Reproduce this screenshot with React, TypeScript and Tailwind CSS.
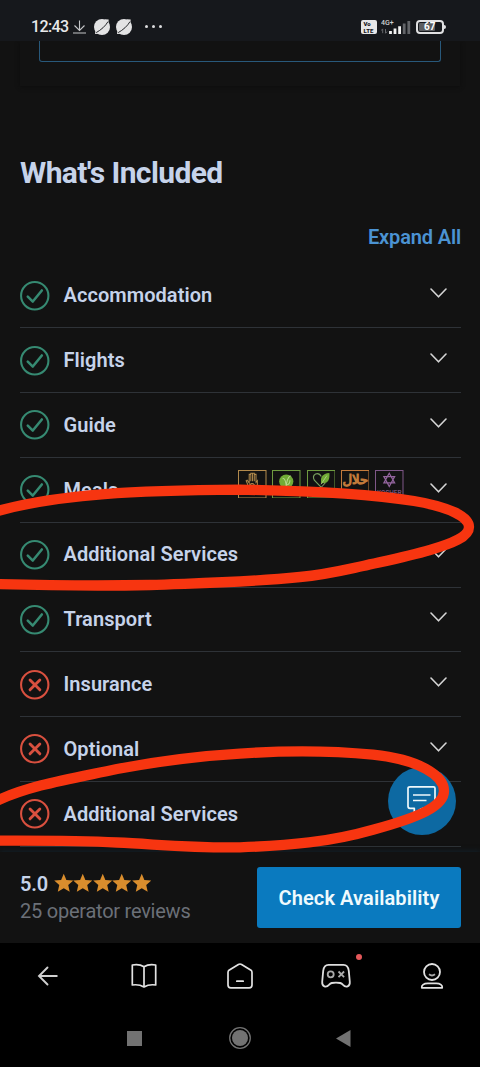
import type { ReactNode } from "react"

type Item = {
  label: string
  included: boolean
  diets?: boolean
}

const items: Item[] = [
  { label: "Accommodation", included: true },
  { label: "Flights", included: true },
  { label: "Guide", included: true },
  { label: "Meals", included: true, diets: true },
  { label: "Additional Services", included: true },
  { label: "Transport", included: true },
  { label: "Insurance", included: false },
  { label: "Optional", included: false },
  { label: "Additional Services", included: false },
]

function StatusBar() {
  return (
    <header className="flex h-[41px] shrink-0 items-center bg-[#16181c] pt-[12px] pr-[34px] pl-[31px] text-[#e8e8ea]">
      <span className="w-[42px] text-[16px] font-medium tracking-[-0.6px]">12:43</span>
      <svg width="14" height="14" viewBox="0 0 14 14" fill="none" stroke="#c4c5c8" strokeWidth="1.1">
        <path d="M6.5 0.5v9.5M1.5 5.5l5 5 5-5M0 13h13" />
      </svg>
      <PlanetIcon className="ml-[6px]" />
      <PlanetIcon className="ml-[4px]" />
      <div className="ml-[12px] flex gap-[4px]">
        <span className="size-[3px] rounded-full bg-[#dcdcde]" />
        <span className="size-[3px] rounded-full bg-[#dcdcde]" />
        <span className="size-[3px] rounded-full bg-[#dcdcde]" />
      </div>
      <div className="ml-auto flex items-center">
        <svg width="16" height="14" viewBox="0 0 16 14" fontSize="6" fontWeight="900" fill="#16181c">
          <rect width="16" height="14" rx="2" fill="#e6e6e8" />
          <text x="2.500" y="6">Vo</text>
          <text x="2.500" y="12.600">LTE</text>
        </svg>
        <svg className="ml-[4px]" width="30" height="16" viewBox="0 0 30 16">
          <text x="0" y="6" fontSize="7" fontWeight="500" fill="#cfd0d2">4G+</text>
          <path d="M1.7 14.2V10M0.2 11.6L1.7 9.8M4.5 10v4.2M6 12.600L4.500 14.300" stroke="#66686c" strokeWidth="1" fill="none" />
          <path d="M9.5 15v-3M14 15v-5.500M18.600 15V7.300" stroke="#f2f2f2" strokeWidth="2.800" />
          <path d="M23.200 15V4.500M27.800 15V2" stroke="#636569" strokeWidth="2.800" />
        </svg>
        <div className="ml-[5px] flex h-[14px] w-[28px] items-center rounded-[4px] border-2 border-[#e0e0e2] p-px">
          <span className="flex h-full w-[16px] items-center rounded-[1px] bg-[#5b5d61] pl-[5px] text-[10px] leading-none font-bold text-white">
            67
          </span>
        </div>
        <span className="h-[4px] w-[2px] rounded-r-sm bg-[#e0e0e2]" />
      </div>
    </header>
  )
}

function PlanetIcon({ className }: { className: string }) {
  return (
    <svg className={className} width="18" height="18" viewBox="0 0 18 18">
      <circle cx="9" cy="9" r="8" fill="#e3e3e4" />
      <path d="M11.500 1.300L15.700 1.600 15.400 5zM2.500 12.500L2 16 6 15.700z" fill="#e3e3e4" />
      <path d="M3.200 14.600C8 12 12.500 8 15 3.600" stroke="#25272b" strokeWidth="1" fill="none" />
    </svg>
  )
}

function StateIcon({ included }: { included: boolean }) {
  return included ? (
    <svg className="-ml-[0.5px] overflow-visible" width="29.5" height="29.5" viewBox="0 0 30 30" fill="none" stroke="#368a72">
      <circle cx="15" cy="15" r="13.9" strokeWidth="2.1" />
      <path d="M7.900 15.900l5.100 5L22.200 9.600" strokeWidth="2.600" strokeLinecap="round" strokeLinejoin="round" />
    </svg>
  ) : (
    <svg className="-ml-[0.5px] overflow-visible" width="29.5" height="29.5" viewBox="0 0 30 30" fill="none" stroke="#d9503f">
      <circle cx="15" cy="15" r="13.9" strokeWidth="2.1" />
      <path d="M10.200 10.200l10 10M20.200 10.200l-10 10" strokeWidth="2.900" strokeLinecap="round" />
    </svg>
  )
}

function DietBadge({ color, children }: { color: string; children: ReactNode }) {
  return (
    <svg width="28.5" height="28.5" viewBox="0 0 28 28" fill="none" stroke={color}>
      <rect x="0.5" y="0.5" width="27" height="27" />
      {children}
    </svg>
  )
}

function DietBadges() {
  return (
    <div className="mt-[-12px] mr-[26.5px] flex gap-[5.7px]">
      <DietBadge color="#b28a4c">
        <path
          d="M9.5 19V14L8 10.5l1-.6 2 3V4.3h1.6V11 3.2h1.7V11 3.2H16V11 4.3h1.7V12l1.3-1.6V15l-2 4M11.5 19v-4.500q2.500-2.200 4.500 0V19M10 16h7"
          strokeWidth="1"
        />
      </DietBadge>
      <DietBadge color="#6f9b40">
        <circle cx="14" cy="11.300" r="7" fill="#70ab36" stroke="none" />
        <path d="M10.400 8q3.600 0 3.600 10 0-10 4.300-12.500M13.800 15q4-1 3.800-5" stroke="#b8d890" strokeWidth="1" />
      </DietBadge>
      <DietBadge color="#6f9b40">
        <path d="M14 17L7.200 10Q5 6 8.400 4 12 2.600 14 6.500" stroke="#77a05e" strokeWidth="1.100" />
        <path d="M14 13C12.800 7 15 3.600 22 3c.5 6-1 11-8 10z" fill="#70ab36" stroke="none" />
        <path d="M14 17l4-4.300M13.800 14L19.500 5.500" stroke="#b6d58e" strokeWidth="0.800" />
      </DietBadge>
      <DietBadge color="#c27a3b">
        <text
          x="14"
          y="13.500"
          textAnchor="middle"
          fontSize="13"
          fontFamily="DejaVu Sans, sans-serif"
          fill="#dd8b3e"
        >
          حلال
        </text>
      </DietBadge>
      <DietBadge color="#7f5788">
        <path d="M14 3.200l5.300 9.500H8.700zM14 16.200L8.700 6.500h10.600z" stroke="#94659f" strokeWidth="1.200" />
        <text x="14" y="24.800" textAnchor="middle" fontSize="6.300" fill="#94659f" stroke="none">KOSHER</text>
      </DietBadge>
    </div>
  )
}

function ItemRow({ item }: { item: Item }) {
  return (
    <li className="flex h-[64.8px] items-center border-b border-[#2e3237] pr-[14px]">
      <StateIcon included={item.included} />
      <span className="-mt-[0.5px] ml-[14.5px] flex-1 text-[20px] font-semibold tracking-[0.06px] text-[#c6d3ea]">{item.label}</span>
      {item.diets && <DietBadges />}
      <svg className="mt-[-4px]" width="17" height="10" viewBox="0 0 17 10" fill="none" stroke="#d5d5d5" strokeWidth="1.600">
        <path d="M1 1l7.500 7.800L16 1" strokeLinecap="round" strokeLinejoin="round" />
      </svg>
    </li>
  )
}

function BookingBar() {
  return (
    <div className="flex h-[91px] shrink-0 items-center justify-between bg-[#121212] pr-[19px] pl-[20px] shadow-[0_-1px_5px_#132029]">
      <div>
        <div className="flex h-[27px] items-center">
          <span className="w-[33.5px] text-[20px] font-semibold tracking-[-0.2px] text-[#c6d3ea]">5.0</span>
          {[0, 1, 2, 3, 4].map((i) => (
            <svg key={i} className="-mt-[2px]" width="19.5" height="20" viewBox="0 0 20 20" fill="#d98d2d">
              <path d="M10 .5l2.700 6.300 7.100.6-5.200 4.600 1.500 7-6.100-3.600L3.900 19l1.500-7L.2 7.400l7.100-.6z" />
            </svg>
          ))}
        </div>
        <p className="text-[20px] leading-[28px] tracking-[-0.24px] text-[#6b7078]">25 operator reviews</p>
      </div>
      <button className="h-[61px] w-[204px] rounded-[3px] bg-[#0a7abf] text-[20px] font-semibold tracking-[0.1px] text-[#f0fafd]">
        Check Availability
      </button>
    </div>
  )
}

function BrowserNav() {
  return (
    <nav className="grid h-[66px] grid-cols-5 place-items-center">
      <svg width="28" height="28" viewBox="0 0 28 28" fill="none" stroke="#d0d0d0" strokeWidth="1.900" strokeLinecap="round">
        <path d="M22.800 14H5M13.500 5.500L5 14l8.500 8.500" />
      </svg>
      <svg width="28" height="28" viewBox="0 0 28 28" fill="none" stroke="#e2e2e2" strokeWidth="1.700" strokeLinejoin="round">
        <path d="M14 4.800Q9 1.500 2.300 3V23Q9 22 14 25q5-3 11.700-2V3Q19 1.500 14 4.800zV25" />
      </svg>
      <svg width="28" height="28" viewBox="0 0 28 28" fill="none" stroke="#e2e2e2" strokeWidth="1.700" strokeLinecap="round">
        <path d="M12.400 2.500L3 8.200Q2 9 2 10.500V23q0 2.800 2.800 2.800h18.400Q26 25.800 26 23V10.500Q26 9 25 8.200L15.600 2.500q-1.600-1-3.200 0zM10.800 19.200h6.400" />
      </svg>
      <div className="relative flex">
        <svg width="32" height="28" viewBox="0 0 32 28" fill="none" stroke="#dedede" strokeWidth="1.800">
          <path d="M8.500 2.800h15c3.500 0 4.800 2 5.300 6l1 11c.4 5-4 6.200-7 2.800-1.600-2-2.800-2-6.800-2s-5.200 0-6.800 2c-3 3.400-7.400 2.200-7-2.800l1-11c.5-4 1.800-6 5.300-6z" />
          <circle cx="10.700" cy="12.300" r="3" stroke="#aaa" />
          <path d="M18.500 9.500l5.600 5.600M24.100 9.500l-5.600 5.600" stroke="#aaa" />
        </svg>
        <span className="absolute -top-[8px] right-[-10px] size-[6px] rounded-full bg-[#e4585a]" />
      </div>
      <svg width="28" height="28" viewBox="0 0 28 28" fill="none" stroke="#e2e2e2" strokeWidth="1.800" strokeLinejoin="round">
        <circle cx="14" cy="10" r="8" />
        <path d="M11 12.300q3 2.500 6 0" stroke="#a8a8a8" />
        <path d="M3.800 25.800c-.5-2.500 2-4.500 6-4.500h8.400c4 0 6.500 2 6 4.500z" />
      </svg>
    </nav>
  )
}

function SystemNav() {
  return (
    <div className="flex h-[58px] items-center justify-center gap-[85.5px] pr-[2px]">
      <span className="size-[15px] bg-[#727272]" />
      <svg className="ml-[0.5px]" width="24" height="24" viewBox="0 0 24 24">
        <circle cx="12" cy="12" r="10.300" fill="none" stroke="#727272" strokeWidth="1.300" />
        <circle cx="12" cy="12" r="8" fill="#727272" />
      </svg>
      <svg className="-ml-[1px]" width="15" height="17" viewBox="0 0 15 17">
        <path d="M14.500 0v17L0 8.500z" fill="#727272" />
      </svg>
    </div>
  )
}

function ChatButton() {
  return (
    <button className="absolute top-[767px] left-[388px] flex size-[68px] items-center justify-center rounded-full bg-[#0d69a2]">
      <svg width="32" height="32" viewBox="0 0 32 32" fill="none" stroke="#eef8fb" strokeWidth="1.700" strokeLinejoin="round">
        <path d="M4 1.800h23.500q1.500 0 1.500 1.500v18.500q0 1.500-1.500 1.500H17q-2.500.2-4 2.200L8.300 29V23.300H4q-2 0-2-2V3.500Q2 1.800 4 1.800zM7 10h17.500M7 15.500h13.500" />
      </svg>
    </button>
  )
}

// Freehand loops drawn around the two "Additional Services" rows
function MarkerLoops() {
  return (
    <svg
      className="pointer-events-none absolute inset-0"
      width="480"
      height="1067"
      viewBox="0 0 480 1067"
      fill="none"
      stroke="#f73510"
      strokeWidth="10.300"
      strokeLinejoin="round"
    >
      <path d="M-6 512C60 493 140 490.500 240 489.700C320 491 375 495 414 501C450 507 469 517 469 527C469 537 452 543.500 430 550C408 556.500 385 561 363 566C340 571 325 574.800 300 577C240 583 200 583 150 585C100 586 50 585.500-6 584" />
      <path d="M-6 802C30 785 70 779 117 769C165 760 200 756 240 753.700C290 750 330 750.500 373 754.700C420 759.500 444 776 444 791C444 806 420 817 373 829.700C330 842 290 845.500 240 847.300C190 848 160 844.500 117 842.500C80 840.500 40 840.500-6 840.700" />
    </svg>
  )
}

export default function App() {
  return (
    <div className="relative flex h-[1067px] w-[480px] flex-col overflow-hidden bg-[#121212] font-[Roboto,sans-serif]">
      <StatusBar />
      <main className="h-[811px] shrink-0 overflow-hidden px-[20px]">
        <div className="h-[45px] px-[19px] shadow-[0_1px_4px_#0d0d0d]">
          <div className="h-[21px] rounded-b-[3px] border border-t-0 border-[#28587a]" />
        </div>
        <h2 className="mt-[68px] text-[30px] leading-[38px] font-bold tracking-[-0.6px] text-[#c6d3ea]">What's Included</h2>
        <div className="mt-[31px] flex justify-end">
          <button className="-mr-px text-[20px] leading-[28px] font-semibold tracking-[-0.15px] text-[#4b93d3]">Expand All</button>
        </div>
        <ul className="mt-[12.6px] -mr-px">
          {items.map((item, i) => (
            <ItemRow key={i} item={item} />
          ))}
        </ul>
      </main>
      <BookingBar />
      <footer className="h-[124px] shrink-0 bg-black">
        <BrowserNav />
        <SystemNav />
      </footer>
      <ChatButton />
      <MarkerLoops />
    </div>
  )
}
